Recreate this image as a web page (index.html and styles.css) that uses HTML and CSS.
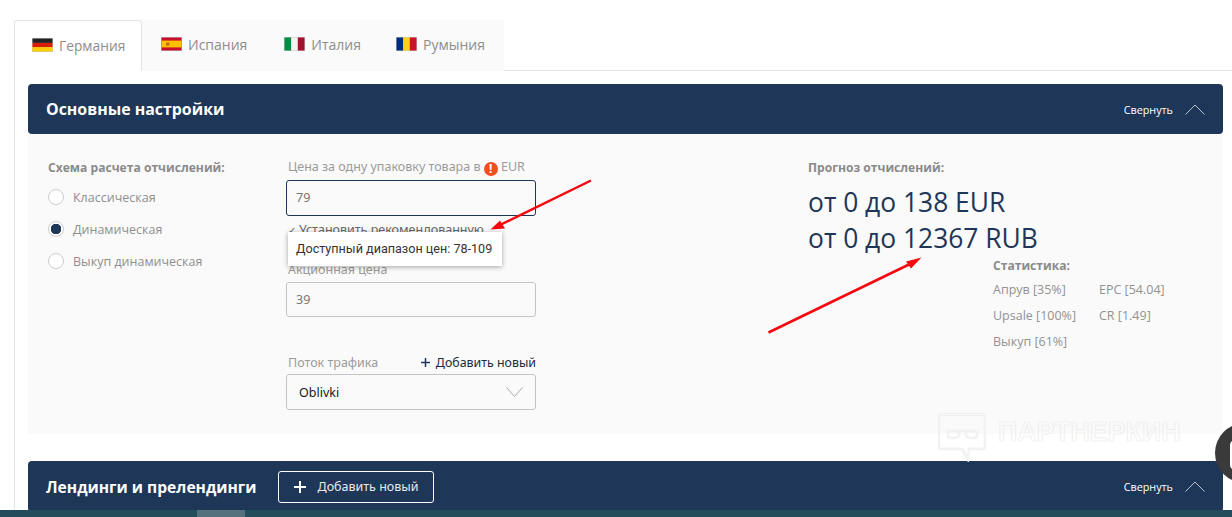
FILE: index.html
```html
<!DOCTYPE html>
<html lang="ru">
<head>
<meta charset="utf-8">
<title>Настройки</title>
<link rel="stylesheet" href="styles.css">
</head>
<body>
<div class="page">
  <nav class="tabs">
    <div class="tab active"><svg class="flag" viewBox="0 0 21 14"><rect width="21" height="14" fill="#c9c9c9"/><rect x=".5" y=".5" width="20" height="4.4" fill="#222"/><rect x=".5" y="4.9" width="20" height="4.3" fill="#d81e05"/><rect x=".5" y="9.2" width="20" height="4.3" fill="#fc0"/></svg>Германия</div>
    <div class="tab"><svg class="flag" viewBox="0 0 21 14"><rect width="21" height="14" fill="#c9c9c9"/><rect x=".5" y=".5" width="20" height="13" fill="#c8102e"/><rect x=".5" y="3.6" width="20" height="6.8" fill="#fcc200"/><rect x="5" y="5.4" width="3.4" height="3.4" rx="1" fill="#c8622e"/></svg>Испания</div>
    <div class="tab"><svg class="flag" viewBox="0 0 21 14"><rect width="21" height="14" fill="#c9c9c9"/><rect x=".5" y=".5" width="6.7" height="13" fill="#008c45"/><rect x="7.2" y=".5" width="6.6" height="13" fill="#f4f5f0"/><rect x="13.8" y=".5" width="6.7" height="13" fill="#a50e2d"/></svg>Италия</div>
    <div class="tab"><svg class="flag" viewBox="0 0 21 14"><rect width="21" height="14" fill="#c9c9c9"/><rect x=".5" y=".5" width="6.7" height="13" fill="#002b7f"/><rect x="7.2" y=".5" width="6.6" height="13" fill="#fcd116"/><rect x="13.8" y=".5" width="6.7" height="13" fill="#ce1126"/></svg>Румыния</div>
  </nav>
  <main class="content">
    <section class="bar">
      <h2 class="bar-title">Основные настройки</h2>
      <div class="collapse">Свернуть<svg class="chev" viewBox="0 0 20 11"><path d="M.5 10.5 10 1l9.5 9.5"/></svg></div>
    </section>
    <section class="panel">
      <div class="col-scheme">
        <div class="heading">Схема расчета отчислений:</div>
        <div class="radio"><span class="dot"></span>Классическая</div>
        <div class="radio"><span class="dot on"></span>Динамическая</div>
        <div class="radio"><span class="dot"></span>Выкуп динамическая</div>
      </div>
      <div class="col-form">
        <div class="label">Цена за одну упаковку товара в <span class="warn">!</span> EUR</div>
        <div class="input focus">79</div>
        <div class="set-rec"><span class="check">✓</span><span>Установить рекомендованную</span></div>
        <div class="label promo-label">Акционная цена</div>
        <div class="input promo">39</div>
        <div class="flow-row"><span class="label flow-label">Поток трафика</span><span class="add"><svg class="plus-dark" viewBox="0 0 9 9"><path d="M4.5 0v9M0 4.500h9"/></svg>Добавить новый</span></div>
        <div class="input select">Oblivki<svg class="chev-down" viewBox="0 0 17 10"><path d="M.5.5 8.500 9.500 16.500.5"/></svg></div>
      </div>
      <div class="col-forecast">
        <div class="heading">Прогноз отчислений:</div>
        <div class="amount">от 0 до 138 EUR</div>
        <div class="amount">от 0 до 12367 RUB</div>
        <div class="stats">
          <div class="heading stats-title">Статистика:</div>
          <div class="stats-grid">
            <span>Апрув [35%]</span><span>EPC [54.04]</span>
            <span>Upsale [100%]</span><span>CR [1.49]</span>
            <span>Выкуп [61%]</span>
          </div>
        </div>
      </div>
    </section>
    <section class="bar bar-second">
      <h2 class="bar-title">Лендинги и прелендинги</h2>
      <div class="add-btn"><svg class="plus-light" viewBox="0 0 12 12"><path d="M6 0v12M0 6h12"/></svg>Добавить новый</div>
      <div class="collapse">Свернуть<svg class="chev" viewBox="0 0 20 11"><path d="M.5 10.500 10 1l9.500 9.500"/></svg></div>
    </section>
  </main>
</div>
<div class="tooltip">Доступный диапазон цен: 78-109</div>
<svg class="arrows" viewBox="0 0 1232 517">
  <path class="shaft" d="M591 180.500 500 225"/>
  <path class="head" d="M490.500 229.500 500 220.500 505 228.500Z"/>
  <path class="shaft" d="M768.500 332.500 910 264"/>
  <path class="head" d="M921.500 257.500 906 261.500 911 268.500Z"/>
</svg>
<div class="watermark">
  <svg class="wm-icon" viewBox="0 0 48 49">
    <g class="wm-outer"><path d="M3 1.500h42a2 2 0 0 1 2 2V34a2 2 0 0 1-2 2H31l-1 11-6-11H3a2 2 0 0 1-2-2V3.500a2 2 0 0 1 2-2Z"/><path d="M8 18h33M10 18v4c0 4 10 4 11 0v-2c2-1 5-1 7 0v2c1 4 11 4 11 0v-4"/></g>
    <g class="wm-inner"><path d="M3 1.500h42a2 2 0 0 1 2 2V34a2 2 0 0 1-2 2H31l-1 11-6-11H3a2 2 0 0 1-2-2V3.500a2 2 0 0 1 2-2Z"/><path d="M8 18h33M10 18v4c0 4 10 4 11 0v-2c2-1 5-1 7 0v2c1 4 11 4 11 0v-4"/></g>
  </svg>
  <span class="wm-text">ПАРТНЕРКИН</span>
</div>
<div class="chat"><span class="chat-inner"></span></div>
<div class="taskbar"><span class="taskbar-item"></span></div>
</body>
</html>
```
FILE: styles.css
```css
* { box-sizing: border-box; }
html, body { margin: 0; padding: 0; height: 517px; overflow: hidden; background: #fff; }
body { position: relative; width: 1232px; font-family: "Open Sans", sans-serif; color: #8c8c8c; }
.page { padding: 20px 0 0 14px; }
.tabs { display: flex; height: 51px; width: 490px; background: #fafafa; margin-bottom: -1px; position: relative; z-index: 1; border-radius: 3px 3px 0 0; }
.tab { display: flex; align-items: center; gap: 6px; height: 50px; padding: 0 19px 2px 18px; font-size: 14px; color: #8d8d8d; white-space: nowrap; }
.tab:nth-child(2) { padding-left: 19px; }
.tab:nth-child(3) { padding-right: 17px; }
.tab.active { height: 51px; width: 128px; background: #fff; border: 1px solid #e5e5e5; border-bottom: 0; border-radius: 3px 3px 0 0; padding: 0 0 2px 17px; font-size: 13.800px; }
.flag { width: 21px; height: 14px; display: block; flex: none; }
.content { border-left: 1px solid #e5e5e5; border-top: 1px solid #e5e5e5; padding: 13px 9px 0 13px; height: 440px; }
.bar { display: flex; align-items: center; height: 50px; background: #1e3657; border-radius: 4px; padding: 0 18px; color: #fff; }
.bar-title { margin: 0; font-size: 15.900px; font-weight: 700; line-height: 22px; color: #fff; }
.bar-second .bar-title { font-size: 15.600px; }
.collapse { margin-left: auto; display: flex; align-items: center; gap: 12px; font-size: 10.800px; color: #fff; }
.chev { width: 20px; height: 11px; display: block; fill: none; stroke: #b9c1cc; stroke-width: 1; }
.panel { display: flex; height: 300px; background: #fafafa; padding: 26px 0 0 20px; }
.heading { font-size: 12.100px; font-weight: 700; color: #8a8a8a; line-height: 16px; }
.col-scheme { width: 238px; flex: none; }
.radio { display: flex; align-items: center; gap: 9px; height: 16px; margin-top: 16px; font-size: 12.500px; color: #8f8f8f; }
.col-scheme .heading + .radio { margin-top: 13px; }
.dot { width: 16px; height: 16px; border-radius: 50%; border: 1px solid #ccc; background: #fff; flex: none; }
.dot.on { background: radial-gradient(circle, #1e3657 0 5px, #fff 5.500px); }
.col-form { width: 250px; flex: none; margin-top: -1px; font-family: "Noto Sans", sans-serif; }
.label { color: #9a9a9a; font-size: 12.500px; line-height: 16px; padding-left: 2px; }
.warn { display: inline-block; width: 14px; height: 14px; border-radius: 50%; background: #f04e23; color: #fff; font-size: 12px; font-weight: 700; line-height: 14px; text-align: center; vertical-align: -2px; }
.input { height: 36px; margin-top: 4px; border: 1px solid #c4c4c4; border-radius: 3px; padding-left: 9px; line-height: 34px; color: #777; font-size: 12.500px; position: relative; }
.input.focus { border-color: #1e3657; }
.input.promo { height: 35px; line-height: 33px; }
.set-rec { display: flex; height: 16px; margin-top: 6px; line-height: 16px; color: #666; font-size: 12.500px; padding-left: 2px; white-space: nowrap; }
.check { flex: none; width: 11px; font-size: 10px; overflow: hidden; }
.promo-label { margin-top: 24px; }
.flow-row { display: flex; justify-content: space-between; margin-top: 37px; line-height: 17px; height: 17px; }
.flow-label { line-height: 17px; }
.add { display: flex; align-items: center; gap: 6px; color: #222b38; font-size: 12.400px; }
.plus-dark { width: 9px; height: 9px; fill: none; stroke: #1e3657; stroke-width: 1.500; }
.select { margin-top: 3px; padding: 1px 0 0 12px; color: #14181f; display: flex; align-items: center; }
.chev-down { position: absolute; right: 12px; top: 12px; width: 17px; height: 10px; fill: none; stroke: #aaa; stroke-width: 1; }
.col-forecast { margin-left: 272px; flex: none; width: 380px; }
.amount { font-size: 26.400px; line-height: 36px; color: #1e3657; white-space: nowrap; }
.heading + .amount { margin-top: 8px; }
.stats { margin: 2px 0 0 185px; }
.stats-title { line-height: 16px; }
.stats-grid { display: grid; grid-template-columns: 106px auto; grid-auto-rows: 26px; margin-top: 3px; font-size: 12.500px; line-height: 26px; color: #929292; }
.bar-second { margin-top: 27px; height: 51px; }
.add-btn { display: flex; align-items: center; gap: 12px; height: 32px; width: 156px; margin-left: 21px; padding-left: 15px; border: 1px solid #fff; border-radius: 3px; font-size: 12.500px; font-family: "Noto Sans", sans-serif; color: #e4e8ed; }
.plus-light { width: 12px; height: 12px; fill: none; stroke: #fff; stroke-width: 2; flex: none; }
.tooltip { position: absolute; left: 288px; top: 232px; width: 214px; height: 34px; background: #fff; box-shadow: 0 1px 5px rgba(0,0,0,.35); font-family: Roboto, sans-serif; font-size: 12.600px; line-height: 33px; color: #333; padding-left: 8px; white-space: nowrap; }
.arrows { position: absolute; left: 0; top: 0; width: 1232px; height: 517px; pointer-events: none; }
.shaft { stroke: #f5080f; stroke-width: 2.500; fill: none; }
.head { fill: #f5080f; }
.watermark { position: absolute; left: 938px; top: 413px; display: flex; gap: 12px; }
.wm-icon { width: 48px; height: 49px; fill: none; }
.wm-outer { stroke: #ececec; stroke-width: 2.400; }
.wm-inner { stroke: #fcfcfc; stroke-width: .8; }
.wm-text { font-family: "Liberation Sans", sans-serif; font-weight: 700; font-size: 26.800px; line-height: 38px; color: transparent; -webkit-text-stroke: .7px #ebebeb; white-space: nowrap; }
.chat { position: absolute; left: 1215px; top: 423px; width: 60px; height: 60px; border-radius: 50%; background: #3a3a3a; }
.chat-inner { position: absolute; left: 15px; top: 17px; width: 30px; height: 30px; border-radius: 5px; background: #fff; }
.taskbar { position: absolute; left: 0; right: 0; bottom: 0; height: 7px; background: #244c5a; }
.taskbar-item { position: absolute; left: 197px; top: 0; width: 48px; height: 7px; background: #54717d; }
```
